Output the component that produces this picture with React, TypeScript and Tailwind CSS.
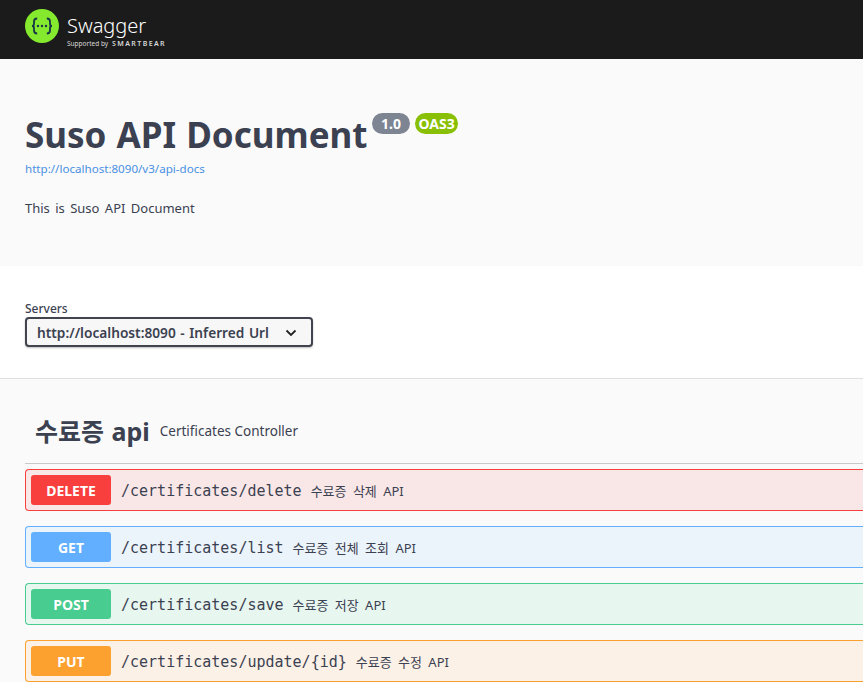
const FONT = "font-['Noto_Sans','Noto_Sans_CJK_KR',sans-serif]";

const operations = [
  {
    method: "DELETE",
    path: "/certificates/delete",
    summary: "수료증 삭제 API",
    row: "border-[#f93e3e] bg-[#f9e7e7]",
    badge: "bg-[#f93e3e]",
  },
  {
    method: "GET",
    path: "/certificates/list",
    summary: "수료증 전체 조회 API",
    row: "border-[#61affe] bg-[#ebf3fb]",
    badge: "bg-[#61affe]",
  },
  {
    method: "POST",
    path: "/certificates/save",
    summary: "수료증 저장 API",
    row: "border-[#49cc90] bg-[#e7f6ef]",
    badge: "bg-[#49cc90]",
  },
  {
    method: "PUT",
    path: "/certificates/update/{id}",
    summary: "수료증 수정 API",
    row: "border-[#fca130] bg-[#fbf1e7]",
    badge: "bg-[#fca130]",
  },
];

const Logo = () => (
  <svg width="34" height="34" viewBox="0 0 34 34" className="shrink-0">
    <circle cx="17" cy="17" r="17" fill="#85ea2d" />
    <path
      d="M12.2 9.5c-2.6 0-3.2 1-3.2 3v2.6c0 1.2-.6 1.9-2 1.9 1.4 0 2 .7 2 1.9v2.6c0 2 .6 3 3.2 3M21.8 9.5c2.6 0 3.2 1 3.2 3v2.6c0 1.2.6 1.9 2 1.9-1.4 0-2 .7-2 1.9v2.6c0 2-.6 3-3.2 3"
      fill="none"
      stroke="#173647"
      strokeWidth="1.8"
    />
    <circle cx="13" cy="17" r="1.2" fill="#173647" />
    <circle cx="17" cy="17" r="1.2" fill="#173647" />
    <circle cx="21" cy="17" r="1.2" fill="#173647" />
  </svg>
);

export default function App() {
  return (
    <div className={`${FONT} h-[692px] overflow-hidden bg-white text-[#3b4151]`}>
      <header className="flex h-[59px] items-start bg-[#1b1b1b] pl-[25px] pt-[9px]">
        <Logo />
        <div className="ml-2 flex flex-col text-white">
          <span className="mt-[4px] text-[20px] font-light leading-[26px]">Swagger</span>
          <span className="flex items-center whitespace-nowrap text-[6.5px] leading-[9px] text-[#d8d8d8]">
            Supported by
            <span className="ml-[4px] text-[7px] font-semibold tracking-[1.4px]">SMARTBEAR</span>
          </span>
        </div>
      </header>

      <section className="h-[207px] bg-[#fafafa] pl-[25px] pt-[55px]">
        <div className="flex items-start">
          <h1 className="text-[35px] font-bold leading-[42px] [word-spacing:1px]">Suso API Document</h1>
          <span className="ml-[4px] mt-[-1px] rounded-[12px] bg-[#7d8492] px-[9.5px] py-0 text-[14px] font-bold leading-[21px] text-white">
            1.0
          </span>
          <span className="ml-[5px] mt-[-1px] rounded-[12px] bg-[#89bf04] px-[3px] text-[14px] font-bold leading-[21px] text-white">
            OAS3
          </span>
        </div>
        <a className="mt-[5px] block text-[11.6px] leading-[16px] text-[#4990e2]">
          http://localhost:8090/v3/api-docs
        </a>
        <p className="mt-[22px] text-[13px] leading-[18px] [word-spacing:2px]">This is Suso API Document</p>
      </section>

      <section className="h-[113px] border-b border-[#e0e0e0] bg-white pl-[25px] pt-[35px] shadow-[0_1px_2px_rgba(0,0,0,0.1)]">
        <div className="text-[12px] font-medium leading-[15px]">Servers</div>
        <div className="mt-px flex h-[30px] w-[288px] items-center rounded-[4px] border-2 border-[#41444e] bg-[#f7f7f7] pl-[10px] pr-[14px] pt-[2px] text-[13.7px] font-semibold shadow-[0_1px_2px_rgba(0,0,0,0.25)] [word-spacing:1px]">
          <span className="flex-1 whitespace-nowrap">http://localhost:8090 - Inferred Url</span>
          <svg width="12" height="8" viewBox="0 0 12 8" fill="none" stroke="#222" strokeWidth="1.8">
            <path d="M1.5 1.5 6 6l4.5-4.5" />
          </svg>
        </div>
      </section>

      <section className="bg-[#fafafa] pl-[25px] pt-[34px]">
        <div className="flex h-[51px] items-center border-b border-[#c9c9c9] pb-[14px] pl-[10px]">
          <h2 className="text-[25px] font-bold leading-[32px] [word-spacing:1px]">수료증 api</h2>
          <span className="ml-[10px] text-[13.5px]">Certificates Controller</span>
        </div>
        <div className="mt-[5px] flex flex-col gap-[15px]">
          {operations.map((op) => (
            <div
              key={op.path}
              className={`flex h-[42px] items-center rounded-l-[4px] border border-r-0 pl-[5px] ${op.row}`}
            >
              <span
                className={`flex h-[30px] w-[80px] items-center justify-center rounded-[3px] text-[14px] font-bold text-white ${op.badge}`}
              >
                {op.method}
              </span>
              <span className="ml-[10px] pt-[2px] font-['DejaVu_Sans_Mono',monospace] text-[15px] leading-[22px]">
                {op.path}
              </span>
              <span className="ml-[9px] pt-[3px] text-[13px] [word-spacing:3px]">{op.summary}</span>
            </div>
          ))}
        </div>
      </section>
    </div>
  );
}
